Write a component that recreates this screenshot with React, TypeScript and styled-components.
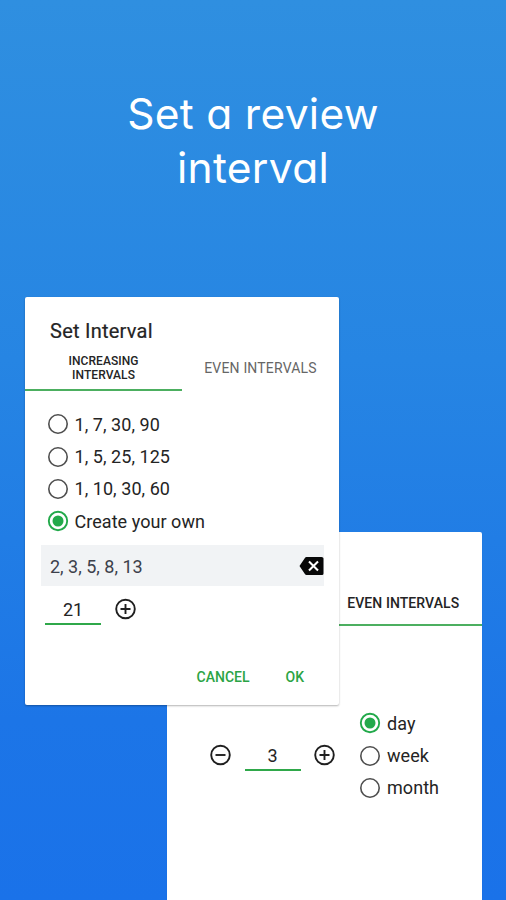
import React from "react";
import styled, { createGlobalStyle } from "styled-components";

const GlobalStyle = createGlobalStyle`
  * { box-sizing: border-box; }
  body { margin: 0; font-family: Roboto, "Liberation Sans", sans-serif; color: #242424; }
`;

const Page = styled.main`
  display: grid;
  grid-template: 297px 603px / 506px;
  width: 506px;
  height: 900px;
  overflow: hidden;
  background: linear-gradient(180deg, #2f8fe0 0%, #2685e3 40%, #1c75e7 80%, #1a72e9 100%);
`;

const Headline = styled.h1`
  margin: 0;
  padding-top: 87px;
  color: #fff;
  font: 400 42.5px/54px Inter, Lato, sans-serif;
  font-feature-settings: "cv11", "ss03";
  letter-spacing: 0.3px;
  text-align: center;
`;

const Dialog = styled.section<{ $back?: boolean }>`
  grid-area: 2 / 1;
  display: flex;
  flex-direction: column;
  width: ${(p) => (p.$back ? 315 : 314)}px;
  height: ${(p) => (p.$back ? 380 : 408)}px;
  margin: ${(p) => (p.$back ? "235px 0 0 167px" : "0 0 0 25px")};
  background: #fff;
  border-radius: 2px;
  box-shadow: ${(p) => (p.$back ? "0 1px 1px rgba(0, 50, 120, 0.25)" : "0 1px 2px rgba(0, 0, 0, 0.3)")};
`;

const Title = styled.h2`
  height: 50px;
  margin: 0;
  padding: 21px 25px 0;
  font-size: 20px;
  font-weight: 400;
  line-height: 26px;
  letter-spacing: 0.25px;
  -webkit-text-stroke: 0.2px currentColor;
`;

const Tabs = styled.div`
  display: grid;
  grid-template-columns: repeat(2, minmax(0, 1fr));
  height: 44px;
`;

const Tab = styled.div<{ $active?: boolean; $small?: boolean }>`
  display: flex;
  align-items: center;
  justify-content: center;
  padding: ${(p) => (p.$small ? "0 36px" : "0")};
  white-space: ${(p) => (p.$small ? "normal" : "nowrap")};
  text-align: center;
  font-size: ${(p) => (p.$small ? 12 : 14)}px;
  line-height: 14px;
  letter-spacing: ${(p) => (p.$active ? 0.08 : 0.18)}px;
  font-weight: ${(p) => (p.$active ? 500 : 400)};
  color: ${(p) => (p.$active ? "#242424" : "#666")};
  border-bottom: 2px solid ${(p) => (p.$active ? "#4caf60" : "transparent")};
`;

const Options = styled.div`
  display: flex;
  flex-direction: column;
`;

const Option = styled.div`
  display: flex;
  align-items: center;
  gap: 7px;
  height: 32.4px;
  font-size: 18px;
  letter-spacing: 0.05px;
  white-space: nowrap;
`;

const IncreasingOptions = styled(Options)`
  padding: 17px 0 0 22.5px;
`;

const Sequence = styled.div`
  display: flex;
  align-items: center;
  justify-content: space-between;
  height: 41px;
  margin: 7px 15px 0 16px;
  padding: 2px 0 0 9px;
  background: #f1f3f5;
  color: #3c404b;
  font-size: 18px;
`;

const AddRow = styled.div`
  display: flex;
  align-items: flex-start;
  gap: 13.5px;
  padding: 11px 0 0 20px;
`;

const NumberField = styled.div`
  width: 56px;
  height: 28px;
  border-bottom: 2px solid #2fa84a;
  text-align: center;
  font-size: 18px;
  line-height: 26px;
`;

const Actions = styled.footer`
  display: flex;
  justify-content: flex-end;
  gap: 36px;
  margin-top: auto;
  padding: 0 35px 18px 0;
  color: #2ba445;
  font-size: 14px;
  font-weight: 500;
  line-height: 20px;
`;

const EvenBody = styled.div`
  display: flex;
  align-items: flex-start;
  padding: 81px 0 0 43px;
`;

const Stepper = styled.div`
  display: flex;
  align-items: flex-start;
  gap: 13.5px;
  width: 150px;
  padding-top: 36px;
`;

const Icon = styled.svg`
  display: block;
  flex: none;
  fill: none;
  overflow: visible;
`;

function Radio({ selected }: { selected?: boolean }) {
  return (
    <Icon width="20" height="20" viewBox="0 0 20 20">
      <circle cx="10" cy="10" r="9.200" stroke={selected ? "#22a94a" : "#4e4e4e"} strokeWidth={selected ? 1.9 : 1.6} />
      {selected && <circle cx="10" cy="10" r="5.500" fill="#22a94a" />}
    </Icon>
  );
}

function StepIcon({ plus }: { plus?: boolean }) {
  return (
    <Icon width="21" height="24" viewBox="0 0 21 24" stroke="#1f1f1f" strokeWidth="1.9">
      <circle cx="10.500" cy="12" r="9.3" />
      <path d={plus ? "M5.500 12h10M10.500 7v10" : "M5.500 12h10"} />
    </Icon>
  );
}

function ClearIcon() {
  return (
    <Icon width="24" height="18" viewBox="0 0 24 18">
      <path d="M6.500 0h15Q23.500 0 23.500 1.500v15q0 1.500-1.500 1.500H6.500q-1 0-1.600-.9L-.5 9 4.900 .9Q5.500 0 6.500 0Z" fill="#080808" />
      <path d="m9 4.500 9 9m0-9-9 9" stroke="#fff" strokeWidth="2.1" />
    </Icon>
  );
}

const sequences = ["1, 7, 30, 90", "1, 5, 25, 125", "1, 10, 30, 60", "Create your own"];
const units = ["day", "week", "month"];

export default function App() {
  return (
    <>
      <GlobalStyle />
      <Page>
        <Headline>
          Set a review
          <br />
          interval
        </Headline>
        <Dialog $back>
          <Title />
          <Tabs>
            <Tab />
            <Tab $active>EVEN INTERVALS</Tab>
          </Tabs>
          <EvenBody>
            <Stepper>
              <StepIcon />
              <NumberField>3</NumberField>
              <StepIcon plus />
            </Stepper>
            <Options>
              {units.map((unit) => (
                <Option key={unit}>
                  <Radio selected={unit === "day"} />
                  {unit}
                </Option>
              ))}
            </Options>
          </EvenBody>
        </Dialog>
        <Dialog>
          <Title>Set Interval</Title>
          <Tabs>
            <Tab $active $small>INCREASING INTERVALS</Tab>
            <Tab>EVEN INTERVALS</Tab>
          </Tabs>
          <IncreasingOptions>
            {sequences.map((label, i) => (
              <Option key={label}>
                <Radio selected={i === 3} />
                {label}
              </Option>
            ))}
          </IncreasingOptions>
          <Sequence>
            2, 3, 5, 8, 13
            <ClearIcon />
          </Sequence>
          <AddRow>
            <NumberField>21</NumberField>
            <StepIcon plus />
          </AddRow>
          <Actions>
            <span>CANCEL</span>
            <span>OK</span>
          </Actions>
        </Dialog>
      </Page>
    </>
  );
}
